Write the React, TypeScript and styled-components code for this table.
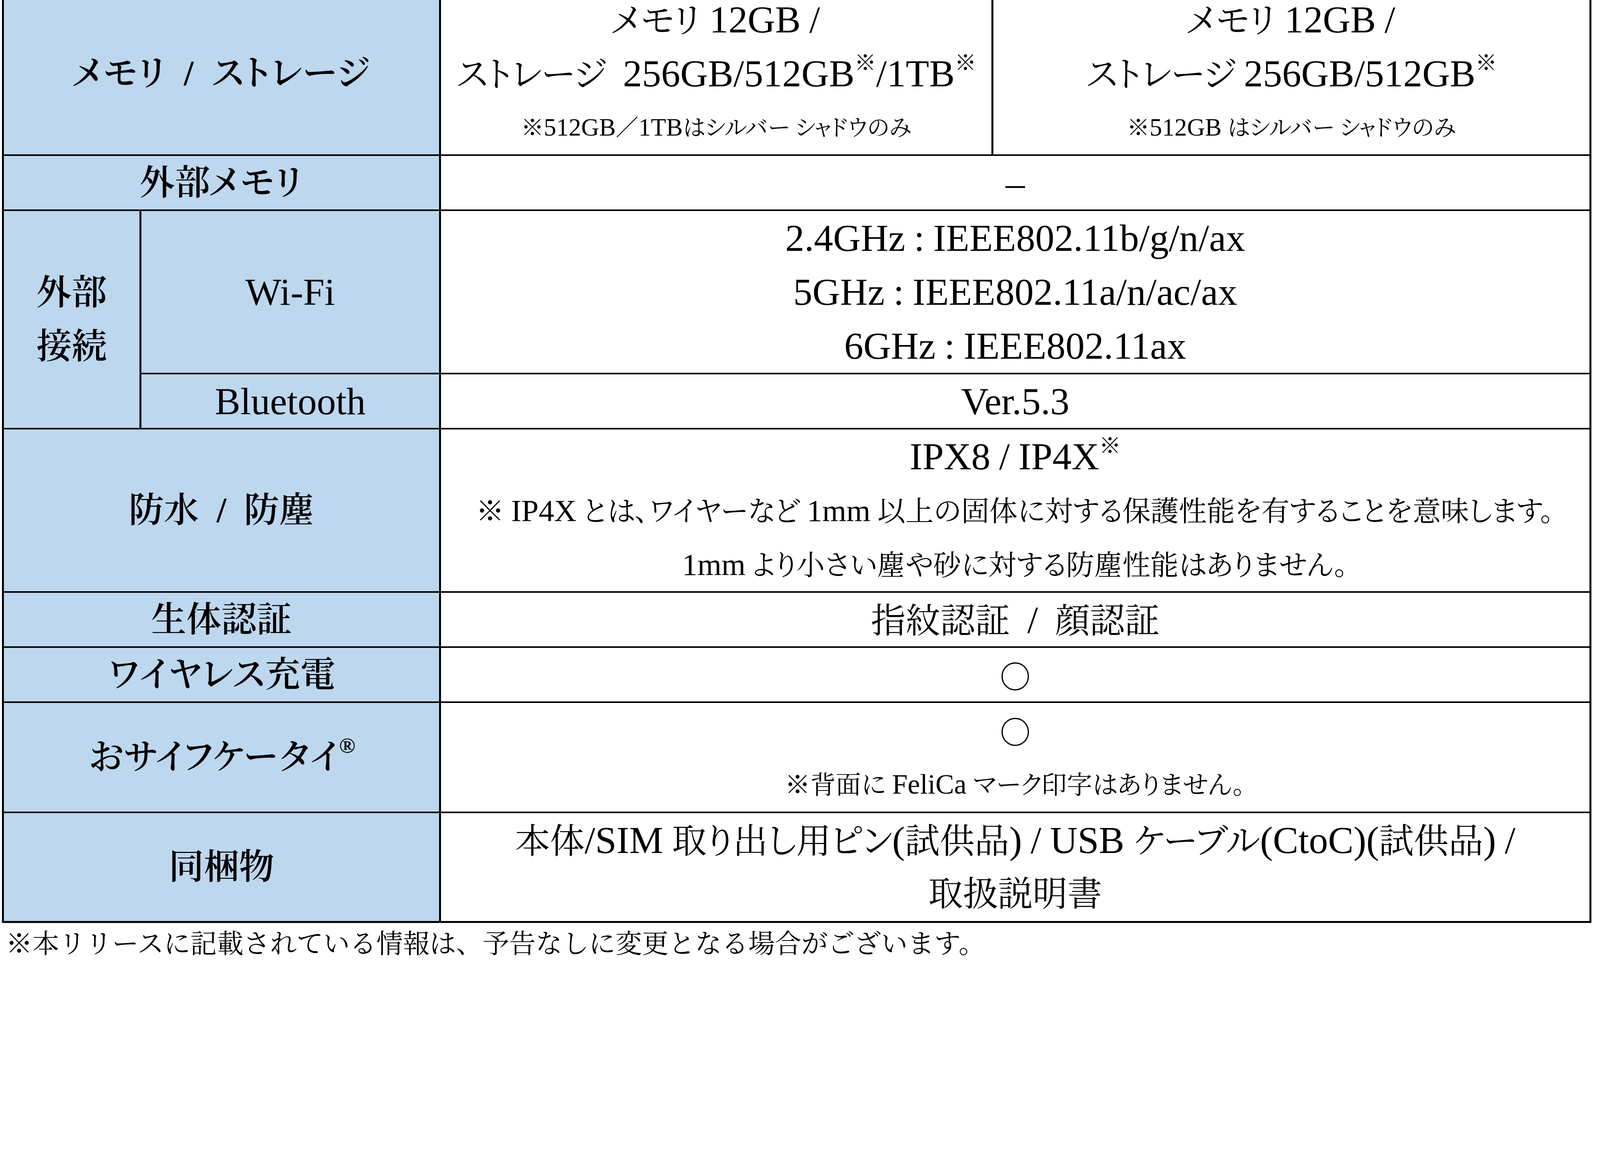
import React from "react";
import styled, { createGlobalStyle } from "styled-components";

const Global = createGlobalStyle`
  html, body { margin: 0; padding: 0; background: #ffffff; }
  body { overflow: hidden; }
`;

const serif = `"Liberation Serif", "Noto Serif CJK JP", "Noto Sans CJK JP", serif`;

const Page = styled.div`
  width: 100vw;
  height: 100vh;
  overflow: hidden;
  background: #ffffff;
  color: #000000;
  font-family: ${serif};
  font-feature-settings: "palt" 1;
`;

const Table = styled.div`
  display: grid;
  grid-template-columns: 347px 762px 1409px 1526px;
  grid-template-rows: 415px 137px 414px 137px 414px 137px 137px 278px 276px;
  gap: 4px 5px;
  width: max-content;
  margin: -20px 0 0 5px;
  padding: 0 5px 5px 5px;
  background: #000000;
`;

const Cell = styled.div<{ $span?: number; $rows?: number; $label?: boolean }>`
  grid-column: span ${(p) => p.$span ?? 1};
  grid-row: span ${(p) => p.$rows ?? 1};
  background: ${(p) => (p.$label ? "#bdd7ee" : "#ffffff")};
  display: flex;
  flex-direction: column;
  align-items: center;
  justify-content: center;
  text-align: center;
  white-space: pre;
`;

const LabelText = styled.div`
  font-size: 90px;
  line-height: 138px;
  font-weight: 600;
`;

const sizes = { main: 89, note: 72, small: 58, felica: 65 } as const;

const Line = styled.div<{ $size?: keyof typeof sizes }>`
  font-size: ${(p) => sizes[p.$size ?? "main"]}px;
  line-height: 138px;
  height: 138px;
`;

const Lat = styled.span`
  font-size: 1.1em;
`;

const Sup = styled.span`
  font-size: 0.62em;
  vertical-align: 0.75em;
  line-height: 0;
`;

const Circle = styled.span`
  font-family: "Noto Serif CJK JP", "Noto Sans CJK JP", serif;
  font-size: 80px;
`;

const Footer = styled.div`
  margin-left: 15px;
  font-size: 68px;
  line-height: 108px;
  white-space: pre;
  font-feature-settings: normal;
`;

const LATIN = /([A-Za-z0-9.:\/()\-–]+)/;

function mix(text: string) {
  return text
    .split(LATIN)
    .filter((part) => part !== "")
    .map((part, i) =>
      LATIN.test(part) ? <Lat key={i}>{part}</Lat> : <React.Fragment key={i}>{part}</React.Fragment>
    );
}

export default function App() {
  return (
    <Page>
      <Global />
      <Table>
        <Cell $span={2} $label>
          <LabelText>{"メモリ  /  ストレージ"}</LabelText>
        </Cell>
        <Cell>
          <Line>{mix("メモリ 12GB /")}</Line>
          <Line>
            {mix("ストレージ  256GB/512GB")}
            <Sup>※</Sup>
            {mix("/1TB")}
            <Sup>※</Sup>
          </Line>
          <Line $size="small">{mix("※512GB／1TBはシルバー シャドウのみ")}</Line>
        </Cell>
        <Cell>
          <Line>{mix("メモリ 12GB /")}</Line>
          <Line>
            {mix("ストレージ 256GB/512GB")}
            <Sup>※</Sup>
          </Line>
          <Line $size="small">{mix("※512GB はシルバー シャドウのみ")}</Line>
        </Cell>

        <Cell $span={2} $label>
          <LabelText>外部メモリ</LabelText>
        </Cell>
        <Cell $span={2}>
          <Line>{mix("–")}</Line>
        </Cell>

        <Cell $rows={2} $label>
          <LabelText>外部</LabelText>
          <LabelText>接続</LabelText>
        </Cell>
        <Cell $label>
          <Line>{mix("Wi-Fi")}</Line>
        </Cell>
        <Cell $span={2}>
          <Line>{mix("2.4GHz : IEEE802.11b/g/n/ax")}</Line>
          <Line>{mix("5GHz : IEEE802.11a/n/ac/ax")}</Line>
          <Line>{mix("6GHz : IEEE802.11ax")}</Line>
        </Cell>
        <Cell $label>
          <Line>{mix("Bluetooth")}</Line>
        </Cell>
        <Cell $span={2}>
          <Line>{mix("Ver.5.3")}</Line>
        </Cell>

        <Cell $span={2} $label>
          <LabelText>{"防水  /  防塵"}</LabelText>
        </Cell>
        <Cell $span={2}>
          <Line>
            {mix("IPX8 / IP4X")}
            <Sup>※</Sup>
          </Line>
          <Line $size="note">
            {mix("※ IP4X とは、ワイヤーなど 1mm 以上の固体に対する保護性能を有することを意味します。")}
          </Line>
          <Line $size="note">{mix("1mm より小さい塵や砂に対する防塵性能はありません。")}</Line>
        </Cell>

        <Cell $span={2} $label>
          <LabelText>生体認証</LabelText>
        </Cell>
        <Cell $span={2}>
          <Line>{mix("指紋認証  /  顔認証")}</Line>
        </Cell>

        <Cell $span={2} $label>
          <LabelText>ワイヤレス充電</LabelText>
        </Cell>
        <Cell $span={2}>
          <Line>
            <Circle>○</Circle>
          </Line>
        </Cell>

        <Cell $span={2} $label>
          <LabelText>
            おサイフケータイ
            <Sup>®</Sup>
          </LabelText>
        </Cell>
        <Cell $span={2}>
          <Line>
            <Circle>○</Circle>
          </Line>
          <Line $size="felica">{mix("※背面に FeliCa マーク印字はありません。")}</Line>
        </Cell>

        <Cell $span={2} $label>
          <LabelText>同梱物</LabelText>
        </Cell>
        <Cell $span={2}>
          <Line>{mix("本体/SIM 取り出し用ピン(試供品) / USB ケーブル(CtoC)(試供品) /")}</Line>
          <Line>取扱説明書</Line>
        </Cell>
      </Table>
      <Footer>{"※本リリースに記載されている情報は、予告なしに変更となる場合がございます。"}</Footer>
    </Page>
  );
}
